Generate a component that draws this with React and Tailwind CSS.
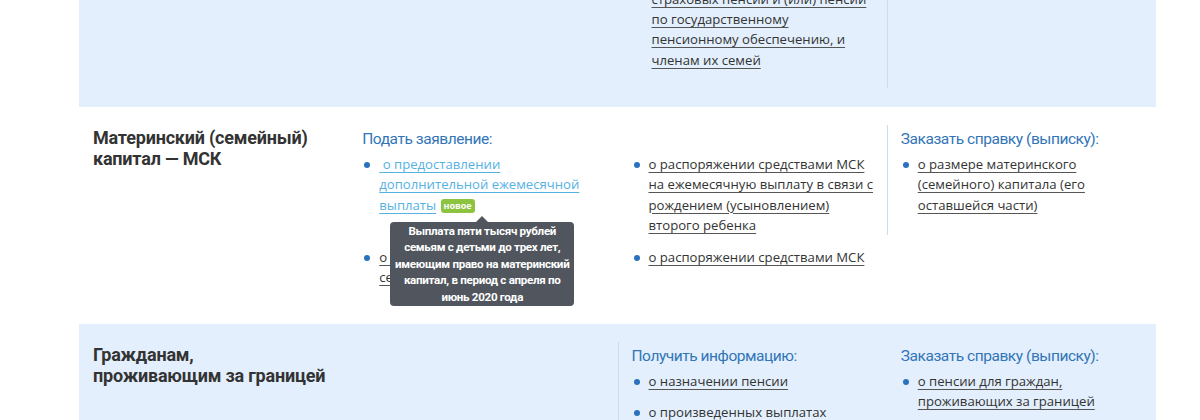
import React from 'react';

// ─── Shared bits ─────────────────────────────────────────────────────────────

const BODY = "font-['Open_Sans','Noto_Sans',sans-serif]";
const COND = "font-['Roboto','Liberation_Sans',sans-serif]";

function Title({ children }) {
  return (
    <div className={`${COND} pl-[14px] pt-[2px] text-[18px] leading-[21px] font-bold text-[#333] tracking-[-0.2px]`}>
      {children}
    </div>
  );
}

function Heading({ children }) {
  return (
    <div className={`${COND} pt-[3px] mb-[4px] text-[15.5px] leading-[22px] text-[#3275b7] tracking-[-0.45px]`}>
      {children}
    </div>
  );
}

function Item({ lines, light, children, className = '' }) {
  return (
    <div className={`relative flex ${className}`}>
      <span className="w-[17px] shrink-0 pt-[8px]">
        <span className="block ml-[2px] w-[6px] h-[6px] rounded-full bg-[#2b72be]" />
      </span>
      <div className={`${BODY} text-[13.15px] leading-[20.3px]`}>
        {lines.map((l, i) => (
          <React.Fragment key={i}>
            <a
              href="#"
              className={light
                ? 'text-[#56b1e3] underline decoration-[#56b1e3] underline-offset-[3px]'
                : 'text-[#333] underline decoration-[#555] underline-offset-[3px]'}
            >
              {l}
            </a>
            {i < lines.length - 1 && <br />}
          </React.Fragment>
        ))}
        {children}
      </div>
    </div>
  );
}

// ─── Page ─────────────────────────────────────────────────────────────────────

export default function App() {
  return (
    <div className="w-[1200px] bg-white pl-[79px] pr-[44px]">
      {/* Пенсионерам (обрезано сверху) */}
      <div className="h-[107px] overflow-hidden bg-[#e3effd] flex flex-col justify-end pb-[19px]">
        <div className="grid grid-cols-4">
          <div />
          <div />
          <div className="pl-[17px] pb-[18px]">
            <Item lines={[
              'о назначении и выплате',
              'страховых пенсий и (или) пенсии',
              'по государственному',
              'пенсионному обеспечению, и',
              'членам их семей',
            ]} />
          </div>
          <div className="border-l border-[#cadcf0]" />
        </div>
      </div>

      {/* Материнский капитал */}
      <div className="bg-white pt-[18px] pb-[36px]">
        <div className="grid grid-cols-4 gap-y-[12px]">
          <div className="row-span-2">
            <Title>
              Материнский (семейный)
              <br />
              капитал — МСК
            </Title>
          </div>

          <div className="pl-[14px]">
            <Heading>Подать заявление:</Heading>
            <Item light lines={['\u00a0о предоставлении', 'дополнительной ежемесячной', 'выплаты']}>
              {' '}
              <span className="inline-block align-[1px] ml-[1px] px-[3px] rounded-[3px] bg-[#8cc43f] text-white text-[9px] leading-[14px] font-bold font-['Open_Sans',sans-serif]">
                новое
              </span>
              <div className="absolute left-[28px] top-[68px] z-10 w-[184px] rounded-[4px] bg-[#51565e] py-[1px] px-[3px] text-center text-white text-[11.6px] leading-[16.4px] font-bold font-['Roboto','Liberation_Sans',sans-serif] tracking-[-0.3px]">
                <span className="absolute left-1/2 -top-[6px] -ml-[6px] w-0 h-0 border-x-[6px] border-x-transparent border-b-[6px] border-b-[#51565e]" />
                Выплата пяти тысяч рублей семьям с детьми до трех лет, имеющим право на материнский капитал, в период с апреля по июнь 2020 года
              </div>
            </Item>
          </div>

          <div className="pl-[14px] pt-[29px]">
            <Item lines={[
              'о распоряжении средствами МСК',
              'на ежемесячную выплату в связи с',
              'рождением (усыновлением)',
              'второго ребенка',
            ]} />
          </div>

          <div className="pl-[13px] border-l border-[#cadcf0]">
            <Heading>Заказать справку (выписку):</Heading>
            <Item lines={['о размере материнского', '(семейного) капитала (его', 'оставшейся части)']} />
          </div>

          <div className="pl-[14px]">
            <Item lines={['о выдаче государственного', 'сертификата на МСК']} />
          </div>
          <div className="pl-[14px]">
            <Item lines={['о распоряжении средствами МСК']} />
          </div>
        </div>
      </div>

      {/* Гражданам за границей */}
      <div className="bg-[#e3effd] pt-[18px] pb-[36px]">
        <div className="grid grid-cols-4">
          <Title>
            Гражданам,
            <br />
            проживающим за границей
          </Title>
          <div />
          <div className="pl-[13px] border-l border-[#cadcf0]">
            <Heading>Получить информацию:</Heading>
            <div className="flex flex-col gap-[11px]">
              <Item lines={['о назначении пенсии']} />
              <Item lines={['о произведенных выплатах']} />
              <Item lines={['о размере пенсии']} />
            </div>
          </div>
          <div className="pl-[14px]">
            <Heading>Заказать справку (выписку):</Heading>
            <Item lines={['о пенсии для граждан,', 'проживающих за границей']} />
          </div>
        </div>
      </div>
    </div>
  );
}
